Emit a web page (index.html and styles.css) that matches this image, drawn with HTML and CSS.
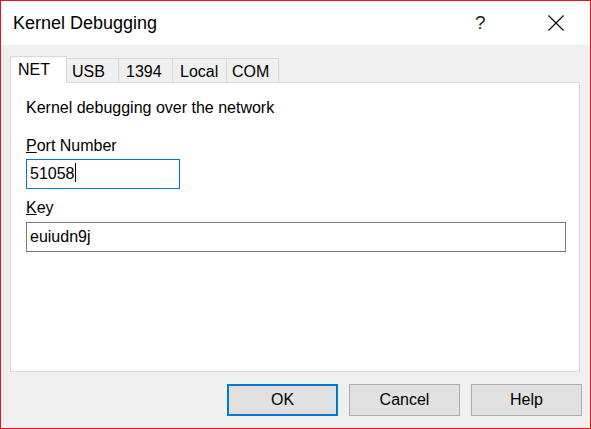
FILE: index.html
```html
<!DOCTYPE html>
<html lang="en">
    <head>
        <meta charset="UTF-8">
        <meta name="viewport" content="width=device-width, initial-scale=1.0">
        <title>Kernel Debugging</title>
        <link rel="stylesheet" href="styles.css">
    </head>
    <body>
        <div class="window">
            <div class="titlebar">
                <span class="title">Kernel Debugging</span>
                <span class="help-btn">?</span>
                <span class="close-btn">
                    <svg width="16" height="16" viewBox="0 0 16 16">
                        <path d="M0.5 0.5 L15.5 15.5 M15.5 0.5 L0.5 15.5" stroke="#000" stroke-width="1.1" fill="none"/>
                    </svg>
                </span>
            </div>
            <div class="content">
                <div class="tabs">
                    <div class="tab active tab-net">NET</div>
                    <div class="tab tab-narrow">USB</div>
                    <div class="tab tab-wide">1394</div>
                    <div class="tab tab-wide">Local</div>
                    <div class="tab tab-narrow">COM</div>
                </div>
                <div class="panel">
                    <div class="desc">Kernel debugging over the network</div>
                    <label class="field-label first"><u>P</u>ort Number</label>
                    <div class="textbox focused short">51058<span class="caret"></span></div>
                    <label class="field-label"><u>K</u>ey</label>
                    <div class="textbox">euiudn9j</div>
                </div>
                <div class="buttons">
                    <button class="btn default">OK</button>
                    <button class="btn">Cancel</button>
                    <button class="btn">Help</button>
                </div>
            </div>
        </div>
    </body>
</html>
```

FILE: styles.css
```css
body {
    margin: 0;
    font-family: "Liberation Sans", Arial, sans-serif;
    color: #000;
}
.window {
    width: 591px;
    height: 429px;
    box-sizing: border-box;
    border: 1px solid #e81123;
    display: flex;
    flex-direction: column;
    background-color: #f0f0f0;
}
.titlebar {
    height: 44px;
    background-color: #fff;
    display: flex;
    align-items: center;
    padding-left: 12px;
}
.title {
    flex: 1;
    font-size: 18px;
}
.help-btn {
    font-size: 19px;
    width: 14px;
    margin-right: 59px;
    color: #222;
}
.close-btn {
    width: 16px;
    height: 16px;
    margin-right: 26px;
    display: flex;
}
.content {
    flex: 1;
    display: flex;
    flex-direction: column;
    padding: 10px 10px 0 9px;
}
.tabs {
    display: flex;
    align-items: flex-end;
    height: 27px;
}
.tab {
    box-sizing: border-box;
    height: 24px;
    line-height: 25px;
    padding: 0 0 0 7px;
    font-size: 16px;
    white-space: nowrap;
    border: 1px solid #d9d9d9;
    border-bottom: none;
    border-left: none;
    background-color: #f0f0f0;
}
.tab-narrow {
    width: 52px;
    padding-left: 5px;
}
.tab-wide {
    width: 54px;
}
.tab.active {
    width: 57px;
    height: 27px;
    line-height: 26px;
    padding-left: 7px;
    border-left: 1px solid #d9d9d9;
    background-color: #fff;
    margin-bottom: -1px;
    position: relative;
    z-index: 1;
}
.panel {
    height: 290px;
    box-sizing: border-box;
    background-color: #fff;
    border: 1px solid #d9d9d9;
    padding: 16px 14px 0 15px;
    font-size: 16px;
}
.desc {
    line-height: 18px;
}
.field-label {
    display: block;
    line-height: 18px;
    margin-top: 10px;
}
.field-label.first {
    margin-top: 20px;
}
.textbox {
    margin-top: 5px;
    height: 28px;
    line-height: 28px;
    box-sizing: content-box;
    border: 1px solid #7a7a7a;
    padding: 0 3px;
    width: 532px;
}
.textbox.short {
    margin-top: 4px;
    width: 146px;
}
.textbox.focused {
    border-color: #0078d7;
}
.caret {
    display: inline-block;
    width: 1px;
    height: 19px;
    background-color: #000;
    vertical-align: -3px;
}
.buttons {
    display: flex;
    justify-content: flex-end;
    gap: 11px;
    margin-top: 12px;
    margin-right: -2px;
}
.btn {
    width: 111px;
    height: 32px;
    font-family: "Liberation Sans", Arial, sans-serif;
    font-size: 16px;
    color: #000;
    background-color: #e1e1e1;
    border: 1px solid #adadad;
    padding: 0;
}
.btn.default {
    border: 2px solid #0078d7;
}
```
